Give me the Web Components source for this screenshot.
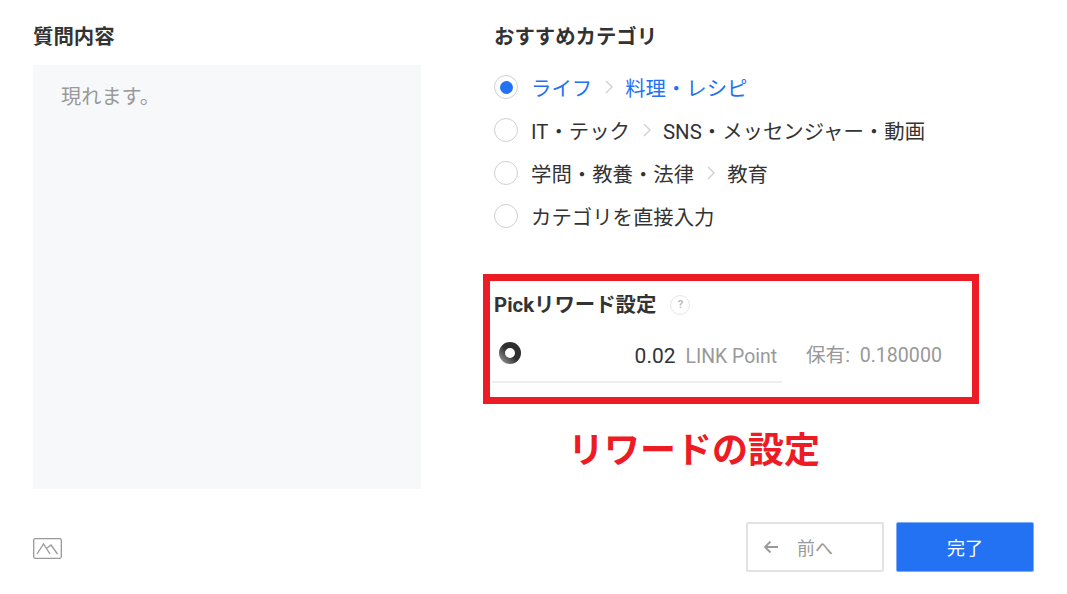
<!DOCTYPE html>
<html lang="ja">
<head>
<meta charset="utf-8">
<title>質問作成</title>
<style>
    html, body {
        margin: 0;
        background: #fff;
    }
    body {
        font-family: Roboto, "Noto Sans CJK JP", sans-serif;
        color: #333;
    }
</style>
</head>
<body>
<question-form>
    <section-title slot="left">質問内容</section-title>
    <question-preview slot="left">現れます。</question-preview>

    <section-title slot="right">おすすめカテゴリ</section-title>
    <category-list slot="right">
        <category-option checked>ライフ<span slot="sub">料理・レシピ</span></category-option>
        <category-option>IT・テック<span slot="sub">SNS・メッセンジャー・動画</span></category-option>
        <category-option>学問・教養・法律<span slot="sub">教育</span></category-option>
        <category-option>カテゴリを直接入力</category-option>
    </category-list>
    <reward-box slot="right" amount="0.02" unit="LINK Point" balance="0.180000"></reward-box>
    <reward-note slot="right">リワードの設定</reward-note>

    <image-button slot="foot-left"></image-button>
    <form-button slot="foot-right" back>前へ</form-button>
    <form-button slot="foot-right" primary>完了</form-button>
</question-form>

<script>
class questionForm extends HTMLElement {
    constructor() {
        super();
        this.shadow = this.attachShadow({ mode: "open" });
    }

    connectedCallback() {
        this.shadow.innerHTML = `
            <style>
                :host {
                    display: block;
                    width: 1067px;
                    height: 594px;
                    box-sizing: border-box;
                    padding: 22px 33px 0;
                }
                .cols {
                    display: grid;
                    grid-template-columns: 388px 1fr;
                    column-gap: 73px;
                    height: 467px;
                }
                .foot {
                    margin-top: 33px;
                    display: flex;
                    justify-content: space-between;
                    align-items: center;
                }
                .foot__right {
                    display: flex;
                    gap: 12px;
                }
            </style>
            <div class="cols">
                <div><slot name="left"></slot></div>
                <div><slot name="right"></slot></div>
            </div>
            <div class="foot">
                <div><slot name="foot-left"></slot></div>
                <div class="foot__right"><slot name="foot-right"></slot></div>
            </div>
        `;
    }
}

class sectionTitle extends HTMLElement {
    constructor() {
        super();
        this.shadow = this.attachShadow({ mode: "open" });
    }

    connectedCallback() {
        this.shadow.innerHTML = `
            <style>
                :host {
                    display: block;
                    height: 29px;
                    line-height: 31px;
                    font-size: 20.4px;
                    font-weight: 700;
                    color: #333;
                }
            </style>
            <slot></slot>
        `;
    }
}

class questionPreview extends HTMLElement {
    constructor() {
        super();
        this.shadow = this.attachShadow({ mode: "open" });
    }

    connectedCallback() {
        this.shadow.innerHTML = `
            <style>
                :host {
                    display: block;
                    margin-top: 14px;
                    height: 424px;
                    box-sizing: border-box;
                    padding: 17px 28px;
                    background: #f7f8fa;
                    font-size: 20.2px;
                    line-height: 30px;
                    color: #999;
                }
            </style>
            <slot></slot>
        `;
    }
}

class categoryList extends HTMLElement {
    constructor() {
        super();
        this.shadow = this.attachShadow({ mode: "open" });
    }

    connectedCallback() {
        this.shadow.innerHTML = `
            <style>
                :host {
                    display: flex;
                    flex-direction: column;
                    gap: 13px;
                    margin-top: 21px;
                }
            </style>
            <slot></slot>
        `;
    }
}

class categoryOption extends HTMLElement {
    constructor() {
        super();
        this.shadow = this.attachShadow({ mode: "open" });
    }

    connectedCallback() {
        const sub = this.querySelector('[slot="sub"]');
        this.shadow.innerHTML = `
            <style>
                :host {
                    display: flex;
                    align-items: center;
                    height: 30px;
                    font-size: 20.4px;
                    color: #333;
                }
                :host([checked]) {
                    color: #2272f3;
                }
                .radio {
                    width: 24px;
                    height: 24px;
                    box-sizing: border-box;
                    border: 1.5px solid #ccd1d1;
                    border-radius: 50%;
                    margin-right: 13px;
                    display: flex;
                    align-items: center;
                    justify-content: center;
                    flex: none;
                }
                :host([checked]) .radio::after {
                    content: "";
                    width: 13px;
                    height: 13px;
                    border-radius: 50%;
                    background: #2272f3;
                }
                svg {
                    margin: 0 12px 0 13px;
                    flex: none;
                }
            </style>
            <span class="radio"></span>
            <slot></slot>
            ${sub ? `<svg width="8" height="14" viewBox="0 0 8 14" fill="none" stroke="#ccd1d1" stroke-width="1.4"><path d="M1 1l6 6-6 6"/></svg>` : ""}
            <slot name="sub"></slot>
        `;
    }
}

class rewardBox extends HTMLElement {
    constructor() {
        super();
        this.shadow = this.attachShadow({ mode: "open" });
    }

    get amount() {
        return this.getAttribute("amount");
    }
    get unit() {
        return this.getAttribute("unit");
    }
    get balance() {
        return this.getAttribute("balance");
    }

    connectedCallback() {
        this.shadow.innerHTML = `
            <style>
                :host {
                    display: block;
                    box-sizing: border-box;
                    width: 496px;
                    height: 130px;
                    margin: 43px 0 0 -11px;
                    border: 7px solid #ed1c24;
                    padding: 0 4px;
                }
                .head {
                    display: flex;
                    align-items: center;
                    gap: 14px;
                    height: 30px;
                    margin-top: 7px;
                    font-size: 20.4px;
                    font-weight: 700;
                    color: #333;
                }
                .help {
                    width: 20px;
                    height: 20px;
                    box-sizing: border-box;
                    border: 1.5px solid #e6e6e6;
                    border-radius: 50%;
                    display: flex;
                    align-items: center;
                    justify-content: center;
                    font-size: 11px;
                    color: #bbb;
                    margin-top: 3px;
                }
                .row {
                    display: flex;
                    align-items: flex-start;
                    margin-top: 9px;
                }
                .field {
                    width: 290px;
                    height: 56px;
                    margin-left: -2px;
                    box-sizing: border-box;
                    border-bottom: 2px solid #eee;
                    display: flex;
                    align-items: center;
                    padding: 4px 5px 0 6px;
                }
                .field svg {
                    flex: none;
                    margin-top: -7px;
                }
                .amount {
                    margin-left: auto;
                    font-size: 21px;
                    color: #333;
                }
                .unit {
                    margin-left: 10px;
                    font-size: 19.4px;
                    color: #999;
                }
                .balance {
                    margin-left: 24px;
                    height: 58px;
                    line-height: 58px;
                    font-size: 19.6px;
                    color: #999;
                    white-space: pre;
                }
            </style>
            <div class="head">
                <span>Pickリワード設定</span>
                <span class="help">?</span>
            </div>
            <div class="row">
                <div class="field">
                    <svg width="24" height="24" viewBox="0 0 24 24">
                        <defs>
                            <linearGradient id="ring" x1="1" y1="0" x2="0" y2="1">
                                <stop offset="0.5" stop-color="#2f2f2f"/>
                                <stop offset="1" stop-color="#8a8a8a"/>
                            </linearGradient>
                        </defs>
                        <circle cx="12" cy="12" r="8" fill="none" stroke="url(#ring)" stroke-width="6"/>
                    </svg>
                    <span class="amount">${this.amount}</span>
                    <span class="unit">${this.unit}</span>
                </div>
                <span class="balance">保有:  ${this.balance}</span>
            </div>
        `;
    }
}

class rewardNote extends HTMLElement {
    constructor() {
        super();
        this.shadow = this.attachShadow({ mode: "open" });
    }

    connectedCallback() {
        this.shadow.innerHTML = `
            <style>
                :host {
                    display: block;
                    margin: 21px 0 0 74px;
                    height: 52px;
                    line-height: 52px;
                    font-size: 36px;
                    font-weight: 700;
                    color: #ed1c24;
                }
            </style>
            <slot></slot>
        `;
    }
}

class imageButton extends HTMLElement {
    constructor() {
        super();
        this.shadow = this.attachShadow({ mode: "open" });
    }

    connectedCallback() {
        this.shadow.innerHTML = `
            <style>
                :host {
                    display: block;
                    width: 29px;
                    height: 21px;
                    margin-top: 3px;
                }
                svg {
                    display: block;
                }
            </style>
            <svg width="29" height="21" viewBox="0 0 29 21" fill="none" stroke="#999" stroke-width="1.3">
                <rect x="0.7" y="0.7" width="27.6" height="19.600" rx="1.5"/>
                <path d="M4 16l6.500-10 6.500 10M14 10l4-3 6.500 9"/>
            </svg>
        `;
    }
}

class formButton extends HTMLElement {
    constructor() {
        super();
        this.shadow = this.attachShadow({ mode: "open" });
    }

    connectedCallback() {
        const back = this.hasAttribute("back");
        this.shadow.innerHTML = `
            <style>
                :host {
                    display: flex;
                    align-items: center;
                    justify-content: center;
                    width: 138px;
                    height: 50px;
                    box-sizing: border-box;
                    border: 2px solid #dfe3e3;
                    border-radius: 2px;
                    font-size: 18px;
                    color: #999;
                    background: #fff;
                }
                :host([back]) {
                    justify-content: flex-start;
                    padding-left: 15px;
                }
                :host([primary]) {
                    background: #2272f3;
                    border-color: #7fabf6;
                    border-width: 1px;
                    color: #fff;
                }
                svg {
                    margin-right: 18px;
                    flex: none;
                }
            </style>
            ${back ? `<svg width="16" height="14" viewBox="0 0 16 14" fill="none" stroke="#999" stroke-width="1.8"><path d="M15 7H2M7.500 1.500L2 7l5.500 5.500"/></svg>` : ""}
            <slot></slot>
        `;
    }
}

window.customElements.define("question-form", questionForm);
window.customElements.define("section-title", sectionTitle);
window.customElements.define("question-preview", questionPreview);
window.customElements.define("category-list", categoryList);
window.customElements.define("category-option", categoryOption);
window.customElements.define("reward-box", rewardBox);
window.customElements.define("reward-note", rewardNote);
window.customElements.define("image-button", imageButton);
window.customElements.define("form-button", formButton);
</script>
</body>
</html>
